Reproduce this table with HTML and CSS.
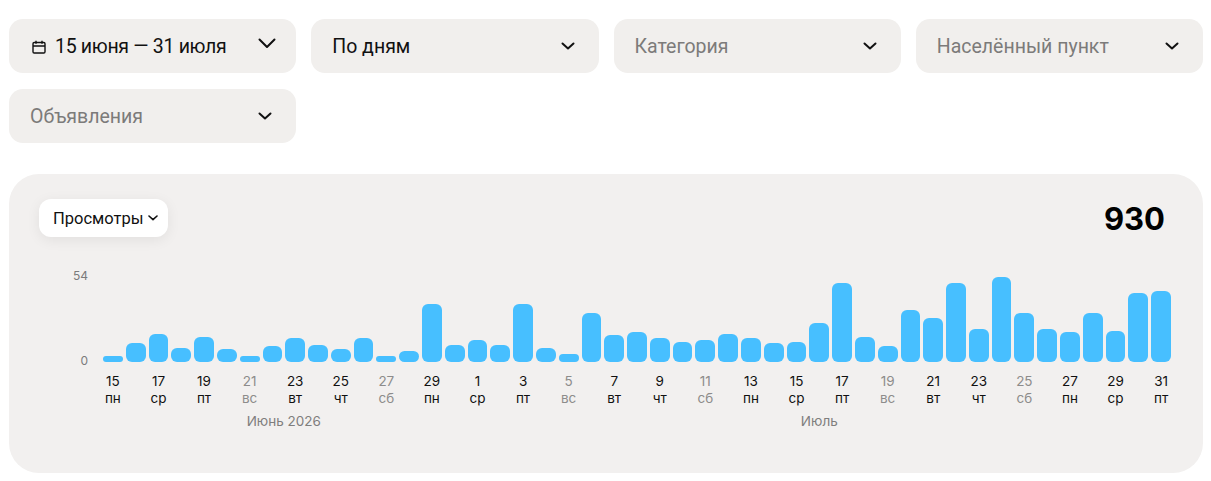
FILE: index.html
```html
<!DOCTYPE html>
<html lang="ru">
<head>
<meta charset="utf-8">
<title>Статистика</title>
<link rel="stylesheet" href="styles.css">
</head>
<body>
<div class="filters">
  <div class="select select-date">
    <span class="select-label">
      <svg class="cal" width="14" height="14" viewBox="0 0 14 14" fill="none" stroke="#111" stroke-width="1.4"><rect x="1" y="2.5" width="12" height="10.5" rx="1.2"/><path d="M1 6h12M4 0.8v3M10 0.8v3"/></svg>
      <span class="value value-date">15 июня — 31 июля</span>
    </span>
    <svg class="chev-big" width="18" height="11" viewBox="0 0 18 11" fill="none" stroke="#111" stroke-width="2" stroke-linecap="round" stroke-linejoin="round"><path d="M1.5 1.5l7.5 7.5 7.5-7.5"/></svg>
  </div>
  <div class="select">
    <span class="value">По дням</span>
    <svg class="chev" width="14" height="8" viewBox="0 0 14 8" fill="none" stroke="#111" stroke-width="2" stroke-linecap="round" stroke-linejoin="round"><path d="M1.5 1.5l5.5 5 5.5-5"/></svg>
  </div>
  <div class="select">
    <span class="placeholder">Категория</span>
    <svg class="chev" width="14" height="8" viewBox="0 0 14 8" fill="none" stroke="#111" stroke-width="2" stroke-linecap="round" stroke-linejoin="round"><path d="M1.5 1.5l5.5 5 5.5-5"/></svg>
  </div>
  <div class="select">
    <span class="placeholder">Населённый пункт</span>
    <svg class="chev" width="14" height="8" viewBox="0 0 14 8" fill="none" stroke="#111" stroke-width="2" stroke-linecap="round" stroke-linejoin="round"><path d="M1.5 1.5l5.5 5 5.5-5"/></svg>
  </div>
  <div class="select">
    <span class="placeholder">Объявления</span>
    <svg class="chev" width="14" height="8" viewBox="0 0 14 8" fill="none" stroke="#111" stroke-width="2" stroke-linecap="round" stroke-linejoin="round"><path d="M1.5 1.5l5.5 5 5.5-5"/></svg>
  </div>
</div>

<section class="card">
  <div class="card-head">
    <button class="metric">Просмотры
      <svg width="10" height="6" viewBox="0 0 10 6" fill="none" stroke="#111" stroke-width="1.6" stroke-linecap="round" stroke-linejoin="round"><path d="M1 1l4 3.6L9 1"/></svg>
    </button>
    <div class="total">930</div>
  </div>
  <div class="chart">
    <div class="y-axis"><span>54</span><span>0</span></div>
    <div class="plot">
      <div class="bar" style="height:6px"></div>
      <div class="bar" style="height:18.9px"></div>
      <div class="bar" style="height:28.3px"></div>
      <div class="bar" style="height:14.2px"></div>
      <div class="bar" style="height:25.2px"></div>
      <div class="bar" style="height:12.6px"></div>
      <div class="bar" style="height:6px"></div>
      <div class="bar" style="height:15.7px"></div>
      <div class="bar" style="height:23.6px"></div>
      <div class="bar" style="height:17.3px"></div>
      <div class="bar" style="height:12.6px"></div>
      <div class="bar" style="height:23.6px"></div>
      <div class="bar" style="height:6px"></div>
      <div class="bar" style="height:11px"></div>
      <div class="bar" style="height:58.2px"></div>
      <div class="bar" style="height:17.3px"></div>
      <div class="bar" style="height:22px"></div>
      <div class="bar" style="height:17.3px"></div>
      <div class="bar" style="height:58.2px"></div>
      <div class="bar" style="height:14.2px"></div>
      <div class="bar" style="height:7.9px"></div>
      <div class="bar" style="height:48.8px"></div>
      <div class="bar" style="height:26.8px"></div>
      <div class="bar" style="height:29.9px"></div>
      <div class="bar" style="height:23.6px"></div>
      <div class="bar" style="height:20.5px"></div>
      <div class="bar" style="height:22px"></div>
      <div class="bar" style="height:28.3px"></div>
      <div class="bar" style="height:23.6px"></div>
      <div class="bar" style="height:18.9px"></div>
      <div class="bar" style="height:20.5px"></div>
      <div class="bar" style="height:39.4px"></div>
      <div class="bar" style="height:78.7px"></div>
      <div class="bar" style="height:25.2px"></div>
      <div class="bar" style="height:15.7px"></div>
      <div class="bar" style="height:51.9px"></div>
      <div class="bar" style="height:44.1px"></div>
      <div class="bar" style="height:78.7px"></div>
      <div class="bar" style="height:33px"></div>
      <div class="bar" style="height:85px"></div>
      <div class="bar" style="height:48.8px"></div>
      <div class="bar" style="height:33px"></div>
      <div class="bar" style="height:29.9px"></div>
      <div class="bar" style="height:48.8px"></div>
      <div class="bar" style="height:31.5px"></div>
      <div class="bar" style="height:69.3px"></div>
      <div class="bar" style="height:70.8px"></div>

      <div class="tick">15<br>пн</div><div class="tick"></div>
      <div class="tick">17<br>ср</div><div class="tick"></div>
      <div class="tick">19<br>пт</div><div class="tick"></div>
      <div class="tick off">21<br>вс</div><div class="tick"></div>
      <div class="tick">23<br>вт</div><div class="tick"></div>
      <div class="tick">25<br>чт</div><div class="tick"></div>
      <div class="tick off">27<br>сб</div><div class="tick"></div>
      <div class="tick">29<br>пн</div><div class="tick"></div>
      <div class="tick">1<br>ср</div><div class="tick"></div>
      <div class="tick">3<br>пт</div><div class="tick"></div>
      <div class="tick off">5<br>вс</div><div class="tick"></div>
      <div class="tick">7<br>вт</div><div class="tick"></div>
      <div class="tick">9<br>чт</div><div class="tick"></div>
      <div class="tick off">11<br>сб</div><div class="tick"></div>
      <div class="tick">13<br>пн</div><div class="tick"></div>
      <div class="tick">15<br>ср</div><div class="tick"></div>
      <div class="tick">17<br>пт</div><div class="tick"></div>
      <div class="tick off">19<br>вс</div><div class="tick"></div>
      <div class="tick">21<br>вт</div><div class="tick"></div>
      <div class="tick">23<br>чт</div><div class="tick"></div>
      <div class="tick off">25<br>сб</div><div class="tick"></div>
      <div class="tick">27<br>пн</div><div class="tick"></div>
      <div class="tick">29<br>ср</div><div class="tick"></div>
      <div class="tick">31<br>пт</div>

      <div class="month month-june">Июнь 2026</div>
      <div class="month month-july">Июль</div>
    </div>
  </div>
</section>
</body>
</html>
```

FILE: styles.css
```css
* { box-sizing: border-box; }

body {
  margin: 19px 8px 8px 9px;
  background: #fff;
  font-family: Roboto, "Noto Sans", "Liberation Sans", sans-serif;
  color: #111;
}

.filters {
  display: grid;
  grid-template-columns: repeat(4, 1fr);
  column-gap: 15px;
  row-gap: 16px;
}

.select {
  height: 54px;
  background: #f1efed;
  border-radius: 14px;
  display: flex;
  align-items: center;
  justify-content: space-between;
  padding: 0 24px 0 21px;
  font-size: 19.5px;
}

.select-date {
  padding: 0 20px 0 23px;
}

.select-label {
  display: flex;
  align-items: center;
  gap: 9px;
}

.cal { display: block; margin-top: 1px; }

.value { color: #111; }

.value-date { letter-spacing: -0.3px; }

.placeholder { color: #7c7b7a; }

.chev, .chev-big { display: block; }

.chev-big { margin-top: -5px; }

.card {
  margin-top: 31px;
  background: #f2f0ef;
  border-radius: 30px;
  height: 299px;
  padding: 25px 32px 0 30px;
}

.card-head {
  display: flex;
  justify-content: space-between;
  align-items: flex-start;
}

.metric {
  height: 38px;
  width: 129px;
  border: none;
  background: #fff;
  border-radius: 12px;
  box-shadow: 0 3px 14px rgba(0, 0, 0, 0.07);
  font-family: Roboto, "Noto Sans", sans-serif;
  font-size: 16.5px;
  color: #111;
  display: flex;
  align-items: center;
  gap: 4px;
  padding: 0 0 0 14px;
}

.total {
  font-family: Inter, Roboto, sans-serif;
  font-weight: 700;
  font-size: 31px;
  line-height: 38px;
  margin-right: 6px;
  margin-top: 1px;
  color: #000;
}

.chart {
  display: flex;
  margin-top: 39px;
}

.y-axis {
  width: 49px;
  height: 99px;
  margin-top: -8px;
  display: flex;
  flex-direction: column;
  justify-content: space-between;
  align-items: flex-end;
  font-family: Inter, Roboto, sans-serif;
  font-size: 12px;
  line-height: 14px;
  color: #7b7b7b;
}

.plot {
  flex: 1;
  margin-left: 15px;
  display: grid;
  grid-template-columns: repeat(47, 1fr);
  grid-template-rows: 85px auto auto;
  column-gap: 3px;
}

.bar {
  align-self: end;
  background: #47bfff;
  border-radius: 6px;
}

.tick {
  margin-top: 11px;
  text-align: center;
  white-space: nowrap;
  font-family: Inter, Roboto, sans-serif;
  font-size: 13.5px;
  line-height: 17px;
  color: #111;
  display: flex;
  flex-direction: column;
  align-items: center;
}

.tick.off { color: #8d8c8b; }

.month {
  margin-top: 6px;
  text-align: center;
  font-family: Inter, Roboto, sans-serif;
  font-size: 13.5px;
  line-height: 17px;
  color: #7f7e7d;
}

.month-june { grid-column: 1 / 17; }
.month-july { grid-column: 17 / 48; }
```
